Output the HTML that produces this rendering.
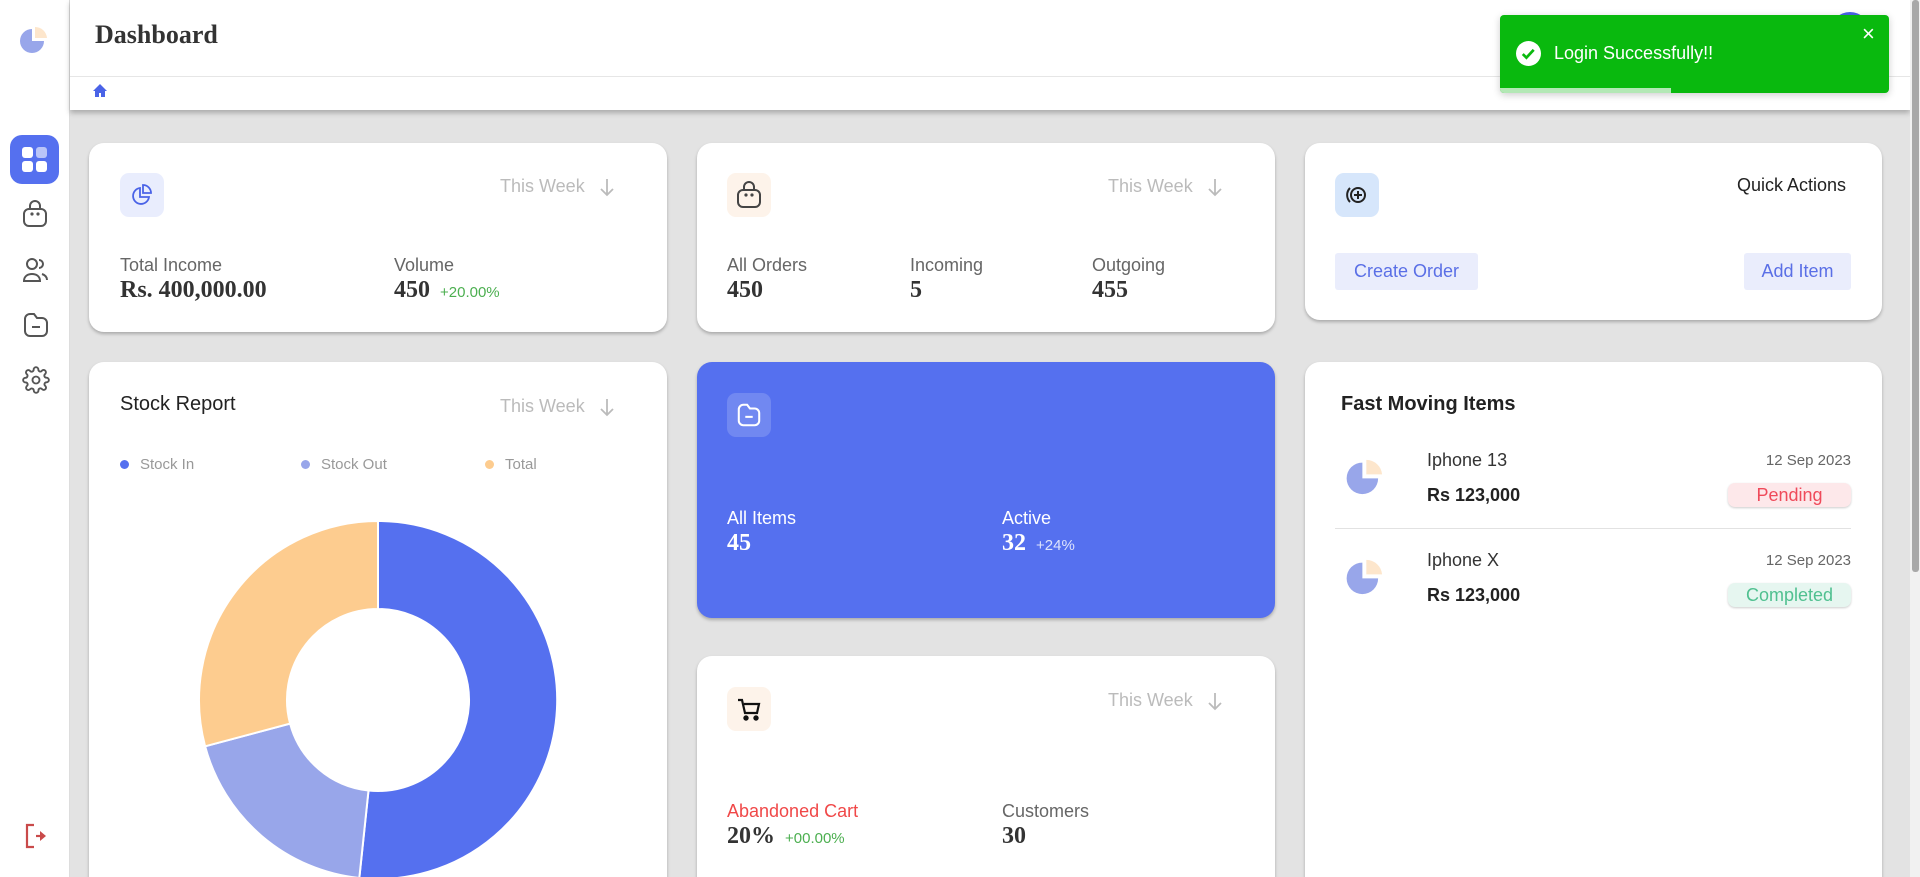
<!DOCTYPE html>
<html><head><meta charset="utf-8"><style>
*{box-sizing:border-box;margin:0;padding:0}
html,body{width:1920px;height:877px;overflow:hidden}
body{background:#e3e3e3;font-family:"Liberation Sans",sans-serif}
#wrap{position:relative;width:1920px;height:877px;overflow:hidden}
.abs{position:absolute}
.side{left:0;top:0;width:70px;height:877px;background:#fff;border-right:1px solid #ddd}
.header{left:70px;top:0;width:1840px;height:110px;background:#fff;box-shadow:0 3px 5px rgba(0,0,0,.25)}
.card{position:absolute;background:#fff;border-radius:15px;box-shadow:0 2px 3px rgba(0,0,0,.25)}
.ibox{position:absolute;width:44px;height:44px;border-radius:9px;display:flex;align-items:center;justify-content:center}
.week{position:absolute;color:#bbb;font-size:18px;display:flex;align-items:center}
.week svg{margin-left:14px}
.lbl{position:absolute;color:#666;font-size:18px}
.val{position:absolute;font-family:"Liberation Serif",serif;font-weight:bold;font-size:24px;color:#333}
.pct{font-family:"Liberation Sans",sans-serif;font-weight:normal;font-size:15px;color:#4caf50;margin-left:10px}
.btn{position:absolute;background:#eaedfc;color:#5a6fe6;font-size:18px;border-radius:3px;display:flex;align-items:center;justify-content:center}
.badge{position:absolute;width:123px;height:24px;border-radius:7px;font-size:18px;display:flex;align-items:center;justify-content:center;box-shadow:0 1px 2px rgba(0,0,0,.2)}
</style></head><body><div id="wrap">
<div class="abs side"></div>
<svg class="abs" style="left:18px;top:24px" width="32" height="32" viewBox="0 0 32 32"><path d="M14 5 A12 12 0 1 0 26 17 L14 17 Z" fill="#98a6ea"/><path d="M17 3 A12 12 0 0 1 29 14 L17 14 Z" fill="#fde6cc"/></svg>
<div class="abs" style="left:10px;top:135px;width:49px;height:49px;background:#5570ef;border-radius:12px"></div>
<svg class="abs" style="left:21px;top:146px" width="27" height="27" viewBox="0 0 27 27"><rect x="1" y="1" width="11" height="11" rx="3" fill="#fff"/><rect x="15" y="1" width="11" height="11" rx="3" fill="#b9c4f8"/><rect x="1" y="15" width="11" height="11" rx="3" fill="#fff"/><rect x="15" y="15" width="11" height="11" rx="3" fill="#fff"/></svg>
<svg class="abs" style="left:22px;top:200px" width="26" height="28" viewBox="0 0 26 28" fill="none" stroke="#555" stroke-width="2"><path d="M8 9V6a5 5 0 0 1 10 0v3"/><rect x="2" y="9" width="22" height="17" rx="5"/><circle cx="10" cy="14" r=".6" fill="#555"/><circle cx="16" cy="14" r=".6" fill="#555"/></svg>
<svg class="abs" style="left:22px;top:256px" width="28" height="28" viewBox="0 0 28 28" fill="none" stroke="#555" stroke-width="2"><circle cx="10" cy="8" r="5"/><path d="M2 25c0-5 4-7 8-7s8 2 8 7z"/><path d="M17 4a4 4 0 0 1 0 8M20 18c3 1 5 3 5 6"/></svg>
<svg class="abs" style="left:22px;top:311px" width="28" height="28" viewBox="0 0 28 28" fill="none" stroke="#555" stroke-width="2"><path d="M3 8a5 5 0 0 1 5-5h4l3 4h5a5 5 0 0 1 5 5v8a5 5 0 0 1-5 5H8a5 5 0 0 1-5-5z"/><path d="M10 16h8"/></svg>
<svg class="abs" style="left:22px;top:366px" width="28" height="28" viewBox="0 0 24 24" fill="none" stroke="#555" stroke-width="1.6"><circle cx="12" cy="12" r="3"/><path d="M19.4 15a1.7 1.7 0 0 0 .3 1.8l.1.1a2 2 0 1 1-2.8 2.8l-.1-.1a1.7 1.7 0 0 0-1.8-.3 1.7 1.7 0 0 0-1 1.5V21a2 2 0 1 1-4 0v-.1a1.7 1.7 0 0 0-1.1-1.5 1.7 1.7 0 0 0-1.8.3l-.1.1a2 2 0 1 1-2.8-2.8l.1-.1a1.7 1.7 0 0 0 .3-1.8 1.7 1.7 0 0 0-1.5-1H3a2 2 0 1 1 0-4h.1a1.7 1.7 0 0 0 1.5-1.1 1.7 1.7 0 0 0-.3-1.8l-.1-.1a2 2 0 1 1 2.8-2.8l.1.1a1.7 1.7 0 0 0 1.8.3H9a1.7 1.7 0 0 0 1-1.5V3a2 2 0 1 1 4 0v.1a1.7 1.7 0 0 0 1 1.5 1.7 1.7 0 0 0 1.8-.3l.1-.1a2 2 0 1 1 2.8 2.8l-.1.1a1.7 1.7 0 0 0-.3 1.8V9a1.7 1.7 0 0 0 1.5 1H21a2 2 0 1 1 0 4h-.1a1.7 1.7 0 0 0-1.5 1z"/></svg>
<svg class="abs" style="left:24px;top:823px" width="24" height="26" viewBox="0 0 24 26" fill="none" stroke="#c94a4a" stroke-width="2.2"><path d="M10 2H3v22h7M3 2v22"/><path d="M12 13h6" /><path d="M16 8l6 5-6 5z" fill="#c94a4a" stroke="none"/></svg>

<div class="abs header"></div>
<div class="abs" style="left:70px;top:76px;width:1840px;height:1px;background:#e6e6e6"></div>
<div class="abs" style="left:95px;top:20px;font-family:'Liberation Serif',serif;font-weight:bold;font-size:26px;color:#333">Dashboard</div>
<svg class="abs" style="left:92px;top:83px" width="16" height="15" viewBox="0 0 16 15"><path d="M8 1L1 8h2v6h4v-4h2v4h4V8h2z" fill="#4a63e7"/></svg>
<div class="abs" style="left:1910px;top:0;width:10px;height:877px;background:#f1f1f1"></div>
<div class="abs" style="left:1912px;top:0;width:7px;height:572px;background:#a8a8a8;border-radius:3px"></div>

<!-- card 1 -->
<div class="card" style="left:89px;top:143px;width:578px;height:189px"></div>
<div class="ibox" style="left:120px;top:173px;background:#e9edfd"><svg width="24" height="24" viewBox="0 0 24 24" fill="none" stroke="#4a63e7" stroke-width="1.8"><path d="M10 5a8 8 0 1 0 9 9h-9z"/><path d="M13 2a8 8 0 0 1 8 8h-8z"/></svg></div>
<div class="week" style="left:500px;top:176px">This Week<svg width="16" height="20" viewBox="0 0 16 20" fill="none" stroke="#bbb" stroke-width="1.8"><path d="M8 2v16M2 12l6 6 6-6"/></svg></div>
<div class="lbl" style="left:120px;top:255px">Total Income</div>
<div class="val" style="left:120px;top:277px">Rs. 400,000.00</div>
<div class="lbl" style="left:394px;top:255px">Volume</div>
<div class="val" style="left:394px;top:277px">450<span class="pct">+20.00%</span></div>

<!-- card 2 -->
<div class="card" style="left:697px;top:143px;width:578px;height:189px"></div>
<div class="ibox" style="left:727px;top:173px;background:#fdf3ea"><svg width="26" height="28" viewBox="0 0 26 28" fill="none" stroke="#444" stroke-width="2"><path d="M8 9V6a5 5 0 0 1 10 0v3"/><rect x="2" y="9" width="22" height="17" rx="5"/><circle cx="10" cy="14" r=".6" fill="#444"/><circle cx="16" cy="14" r=".6" fill="#444"/></svg></div>
<div class="week" style="left:1108px;top:176px">This Week<svg width="16" height="20" viewBox="0 0 16 20" fill="none" stroke="#bbb" stroke-width="1.8"><path d="M8 2v16M2 12l6 6 6-6"/></svg></div>
<div class="lbl" style="left:727px;top:255px">All Orders</div>
<div class="val" style="left:727px;top:277px">450</div>
<div class="lbl" style="left:910px;top:255px">Incoming</div>
<div class="val" style="left:910px;top:277px">5</div>
<div class="lbl" style="left:1092px;top:255px">Outgoing</div>
<div class="val" style="left:1092px;top:277px">455</div>

<!-- card 3 -->
<div class="card" style="left:1305px;top:143px;width:577px;height:177px"></div>
<div class="ibox" style="left:1335px;top:173px;background:#d6e6fb"><svg width="28" height="24" viewBox="0 0 28 24" fill="none" stroke="#222" stroke-width="2"><circle cx="15" cy="12" r="7"/><path d="M15 8v8M11 12h8"/><path d="M7 5a10 10 0 0 0 0 14"/></svg></div>
<div class="abs" style="left:1737px;top:175px;font-size:18px;color:#222">Quick Actions</div>
<div class="btn" style="left:1335px;top:253px;width:143px;height:37px">Create Order</div>
<div class="btn" style="left:1744px;top:253px;width:107px;height:37px">Add Item</div>

<!-- stock report -->
<div class="card" style="left:89px;top:362px;width:578px;height:540px"></div>
<div class="abs" style="left:120px;top:393px;font-size:20px;color:#222">Stock Report</div>
<div class="week" style="left:500px;top:396px">This Week<svg width="16" height="20" viewBox="0 0 16 20" fill="none" stroke="#bbb" stroke-width="1.8"><path d="M8 2v16M2 12l6 6 6-6"/></svg></div>
<div class="abs" style="left:120px;top:456px;font-size:15px;color:#999"><span style="display:inline-block;width:9px;height:9px;border-radius:50%;background:#5570ef;margin-right:11px"></span>Stock In</div>
<div class="abs" style="left:301px;top:456px;font-size:15px;color:#999"><span style="display:inline-block;width:9px;height:9px;border-radius:50%;background:#98a6ea;margin-right:11px"></span>Stock Out</div>
<div class="abs" style="left:485px;top:456px;font-size:15px;color:#999"><span style="display:inline-block;width:9px;height:9px;border-radius:50%;background:#fdcc8f;margin-right:11px"></span>Total</div>
<svg class="abs" style="left:198px;top:520px" width="360" height="360" viewBox="-180 -180 360 360">
<path d="M0,-179 A179 179 0 1 1 -18.7,178 L-9.5,90.5 A91 91 0 1 0 0,-91 Z" fill="#5570ef" stroke="#fff" stroke-width="2"/>
<path d="M-18.7,178 A179 179 0 0 1 -172.9,46.3 L-87.9,23.6 A91 91 0 0 0 -9.5,90.5 Z" fill="#98a6ea" stroke="#fff" stroke-width="2"/>
<path d="M-172.9,46.3 A179 179 0 0 1 0,-179 L0,-91 A91 91 0 0 0 -87.9,23.6 Z" fill="#fdcc8f" stroke="#fff" stroke-width="2"/>
</svg>

<!-- blue card -->
<div class="card" style="left:697px;top:362px;width:578px;height:256px;background:#5570ef"></div>
<div class="ibox" style="left:727px;top:393px;background:rgba(255,255,255,.17)"><svg width="26" height="26" viewBox="0 0 28 28" fill="none" stroke="#fff" stroke-width="2.2"><path d="M3 8a5 5 0 0 1 5-5h4l3 4h5a5 5 0 0 1 5 5v8a5 5 0 0 1-5 5H8a5 5 0 0 1-5-5z"/><path d="M10 16h8"/></svg></div>
<div class="lbl" style="left:727px;top:508px;color:#fff">All Items</div>
<div class="val" style="left:727px;top:530px;color:#fff">45</div>
<div class="lbl" style="left:1002px;top:508px;color:#fff">Active</div>
<div class="val" style="left:1002px;top:530px;color:#fff">32<span class="pct" style="color:#dde3fc">+24%</span></div>

<!-- cart card -->
<div class="card" style="left:697px;top:656px;width:578px;height:260px"></div>
<div class="ibox" style="left:727px;top:687px;background:#fdf3ea"><svg width="26" height="26" viewBox="0 0 26 26" fill="none" stroke="#111" stroke-width="2.2"><path d="M2 4h4l3 13h12l2-9H8"/><circle cx="10" cy="22" r="1.6" fill="#111"/><circle cx="20" cy="22" r="1.6" fill="#111"/></svg></div>
<div class="week" style="left:1108px;top:690px">This Week<svg width="16" height="20" viewBox="0 0 16 20" fill="none" stroke="#bbb" stroke-width="1.8"><path d="M8 2v16M2 12l6 6 6-6"/></svg></div>
<div class="lbl" style="left:727px;top:801px;color:#f04848">Abandoned Cart</div>
<div class="val" style="left:727px;top:823px">20%<span class="pct">+00.00%</span></div>
<div class="lbl" style="left:1002px;top:801px">Customers</div>
<div class="val" style="left:1002px;top:823px">30</div>

<!-- fast moving -->
<div class="card" style="left:1305px;top:362px;width:577px;height:540px"></div>
<div class="abs" style="left:1341px;top:393px;font-size:20px;font-weight:bold;color:#222">Fast Moving Items</div>
<svg class="abs" style="left:1344px;top:456px" width="42" height="42" viewBox="0 0 32 32"><path d="M14 5 A12 12 0 1 0 26 17 L14 17 Z" fill="#98a6ea"/><path d="M17 3 A12 12 0 0 1 29 14 L17 14 Z" fill="#fde6cc"/></svg>
<div class="abs" style="left:1427px;top:450px;font-size:18px;color:#333">Iphone 13</div>
<div class="abs" style="left:1427px;top:485px;font-size:18px;font-weight:bold;color:#222">Rs 123,000</div>
<div class="abs" style="left:1700px;top:452px;width:151px;text-align:right;font-size:15px;color:#666">12 Sep 2023</div>
<div class="badge" style="left:1728px;top:483px;background:#fde8ea;color:#ef4a5a">Pending</div>
<div class="abs" style="left:1335px;top:528px;width:516px;height:1px;background:#e2e2e2"></div>
<svg class="abs" style="left:1344px;top:556px" width="42" height="42" viewBox="0 0 32 32"><path d="M14 5 A12 12 0 1 0 26 17 L14 17 Z" fill="#98a6ea"/><path d="M17 3 A12 12 0 0 1 29 14 L17 14 Z" fill="#fde6cc"/></svg>
<div class="abs" style="left:1427px;top:550px;font-size:18px;color:#333">Iphone X</div>
<div class="abs" style="left:1427px;top:585px;font-size:18px;font-weight:bold;color:#222">Rs 123,000</div>
<div class="abs" style="left:1700px;top:552px;width:151px;text-align:right;font-size:15px;color:#666">12 Sep 2023</div>
<div class="badge" style="left:1728px;top:583px;background:#e6f6f0;color:#50c090">Completed</div>

<!-- toast -->
<div class="abs" style="left:1830px;top:12px;width:40px;height:40px;border-radius:50%;background:#4a63e7"></div>
<div class="abs" style="left:1500px;top:15px;width:389px;height:78px;background:#09b90e;border-radius:4px;box-shadow:0 2px 8px rgba(0,0,0,.2);overflow:hidden">
<svg class="abs" style="left:16px;top:26px" width="25" height="25" viewBox="0 0 24 24"><circle cx="12" cy="12" r="12" fill="#fff"/><path d="M6.5 12.5l3.5 3.5 7-7.5" fill="none" stroke="#09b90e" stroke-width="2.6"/></svg>
<div class="abs" style="left:54px;top:28px;font-size:18px;color:#fff">Login Successfully!!</div>
<div class="abs" style="left:362px;top:6px;font-size:22px;color:#fff">&#215;</div>
<div class="abs" style="left:0;top:73px;width:171px;height:5px;background:#b3e8b5"></div>
</div>
</div></body></html>
